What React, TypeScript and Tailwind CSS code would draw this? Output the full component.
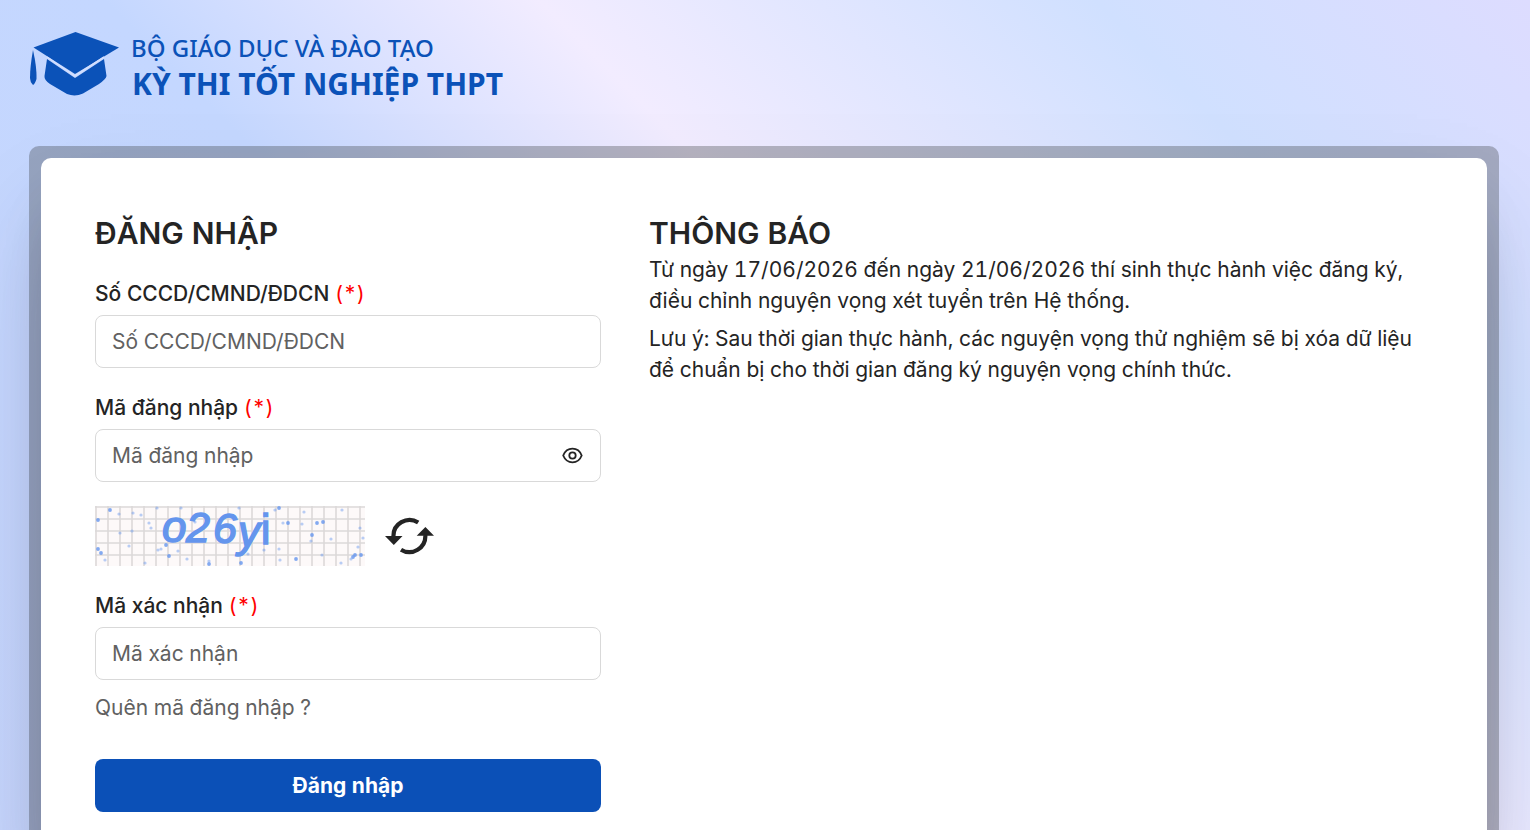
import { FormEvent, useState } from 'react';

const speckles = [
    [3, 14, 2], [15, 4, 2], [24, 8, 1], [3, 43, 2], [6, 47, 2], [10, 54, 1], [38, 7, 1], [37, 25, 1],
    [46, 9, 1], [54, 17, 1], [56, 22, 1], [62, 2, 1], [66, 43, 1], [63, 44, 1], [71, 39, 2], [74, 50, 2],
    [83, 45, 1], [92, 53, 1], [86, 2, 1], [100, 16, 1], [114, 55, 1], [114, 58, 2], [113, 11, 1], [50, 57, 1],
    [127, 33, 1], [146, 57, 2], [144, 2, 1], [153, 48, 1], [169, 44, 1], [184, 2, 2], [180, 4, 1], [193, 17, 2],
    [188, 17, 1], [207, 18, 1], [209, 6, 1], [222, 17, 2], [228, 16, 2], [217, 29, 2], [216, 35, 1], [184, 43, 1],
    [201, 53, 2], [185, 54, 1], [227, 49, 1], [247, 4, 1], [246, 57, 1], [256, 53, 1], [260, 49, 2], [266, 49, 2],
    [258, 51, 2], [263, 41, 1], [268, 32, 1], [265, 22, 1], [25, 27, 1], [34, 40, 1], [86, 31, 1], [236, 33, 1],
];

const Logo = () => (
    <svg viewBox="0 0 500 84" className="h-[84px] w-[500px]" role="img" aria-label="Kỳ thi tốt nghiệp THPT">
        <g fill="#0b52b8">
            <path d="M4.500 19.500 46.500 4 90 19.500 46 46Z" />
            <path d="M18 31 46 50 75 31 77.500 48Q77 51 70 56L54 65.500Q46 69 38 66L21 56Q15 52 15.500 48Z" />
            <path d="M4 22Q8 40 7.500 51Q6 56 4 57Q1 54 1 50Q1 39 4 22Z" />
            <path d="M18 29 46 48 75 29" fill="none" stroke="#d3dffe" strokeWidth="1.500" />
            <text x="102" y="29" fontFamily="Noto Sans, sans-serif" fontSize="24" fontWeight="500">BỘ GIÁO DỤC VÀ ĐÀO TẠO</text>
            <text x="103" y="67" fontFamily="Noto Sans, sans-serif" fontSize="30" fontWeight="700">KỲ THI TỐT NGHIỆP THPT</text>
        </g>
    </svg>
);

const Captcha = () => (
    <svg viewBox="0 0 270 60" className="h-[60px] w-[270px] overflow-visible" role="img" aria-label="Captcha">
        <defs>
            <pattern id="grid" width="12" height="12" patternUnits="userSpaceOnUse">
                <path d="M1 0V12M0 1H12" stroke="#dcd9d9" strokeWidth="1.600" fill="none" />
            </pattern>
        </defs>
        <rect width="270" height="60" fill="#fdf9f9" />
        <rect width="270" height="60" fill="url(#grid)" />
        {speckles.map(([x, y, r], idx) => (
            <circle key={idx} cx={x} cy={y} r={r > 1 ? 1.9 : 1.6} fill="#6495ed" opacity={r > 1 ? 0.8 : 0.45} />
        ))}
        <g fill="#6495ed" stroke="#6495ed" strokeWidth="1.500" fontFamily="Liberation Sans, sans-serif" fontStyle="italic">
            <text x="67" y="36" fontSize="44">o</text>
            <text x="91" y="36" fontSize="43">2</text>
            <text x="118" y="37" fontSize="43">6</text>
            <text x="143" y="41" fontSize="44">y</text>
            <text x="166" y="38" fontSize="42" fontStyle="normal">i</text>
        </g>
    </svg>
);

const EyeIcon = () => (
    <svg viewBox="0 0 22 18" className="h-[18px] w-[22px]" fill="none" stroke="#242424" strokeWidth="1.800">
        <path d="M1.200 8.500C3 4.100 6.300 1.700 10.500 1.700S18 4.100 19.700 8.500C18 12.900 14.700 15.300 10.500 15.300S3 12.900 1.200 8.500Z" />
        <circle cx="10.500" cy="8.500" r="3.200" />
    </svg>
);

const RefreshIcon = () => (
    <svg viewBox="0 0 50 38" className="h-[38px] w-[50px]">
        <path d="M8.500 20A16 16 0 0 1 33.200 5.600M40.300 18A16 16 0 0 1 16 32.700" fill="none" stroke="#242424" strokeWidth="4.200" />
        <path d="M0 19H17.500L8.800 28ZM31.700 18.800H49L40.400 10Z" fill="#242424" />
    </svg>
);

type FieldProps = {
    id: string;
    label: string;
    type?: string;
    children?: React.ReactNode;
};

const Field = ({ id, label, type = 'text', children }: FieldProps) => (
    <div>
        <label htmlFor={id} className="block text-[21px] leading-8 font-medium mb-[5px]">
            {label} <span className="text-[#ff0000] font-normal">(*)</span>
        </label>
        <div className="flex h-[53px] items-center rounded-lg border border-[#d9d9d9] bg-white px-4">
            <input
                id={id}
                type={type}
                placeholder={label}
                className="min-w-0 flex-1 bg-transparent text-[21px] outline-none placeholder:text-[#616161]"
            />
            {children}
        </div>
    </div>
);

const App = () => {
    const [showCode, setShowCode] = useState(false);

    const handleSubmit = (e: FormEvent) => e.preventDefault();

    return (
        <div className="min-h-screen overflow-hidden bg-[linear-gradient(45deg,#c6d5fc_0%,#c4d7ff_41%,#f2ecff_59%,#d0e0ff_82%,#dddcff_100%)] px-[29px] font-['Inter',sans-serif] text-[#242424] tabular-nums">
            <header className="pt-7 pb-[34px]">
                <Logo />
            </header>

            <main className="mr-[2px] rounded-[10px] bg-[#2b302f]/30 p-3">
                <div className="flex gap-12 rounded-[10px] bg-white px-[54px] pt-14 pb-16 shadow-[0_50px_100px_-20px_rgba(50,50,93,0.25),0_30px_60px_-30px_rgba(0,0,0,0.3)]">
                    <form onSubmit={handleSubmit} className="w-[38%] max-w-[506px] shrink-0">
                        <h1 className="text-[30px] leading-[38px] font-semibold">ĐĂNG NHẬP</h1>
                        <div className="mt-[26px] flex flex-col gap-6">
                            <Field id="cccd" label="Số CCCD/CMND/ĐDCN" />
                            <Field id="code" label="Mã đăng nhập" type={showCode ? 'text' : 'password'}>
                                <button type="button" aria-label="Hiện mã đăng nhập" onClick={() => setShowCode(!showCode)}>
                                    <EyeIcon />
                                </button>
                            </Field>
                            <div className="flex items-center gap-5">
                                <Captcha />
                                <button type="button" aria-label="Đổi mã xác nhận">
                                    <RefreshIcon />
                                </button>
                            </div>
                            <Field id="captcha" label="Mã xác nhận" />
                        </div>
                        <a href="#" className="mt-3 block text-[21px] leading-8 text-[#616161]">Quên mã đăng nhập ?</a>
                        <button type="submit" className="mt-[35px] h-[53px] w-full rounded-lg bg-[#0b50b7] text-[21px] font-bold text-white">
                            Đăng nhập
                        </button>
                    </form>

                    {/* Announcement column */}
                    <section className="min-w-0 flex-1">
                        <h2 className="mb-[2px] text-[30px] leading-[38px] font-semibold">THÔNG BÁO</h2>
                        <p className="mb-[7px] text-[21px] leading-[31px]">
                            Từ ngày 17/06/2026 đến ngày 21/06/2026 thí sinh thực hành việc đăng ký, điều chỉnh nguyện vọng xét tuyển trên Hệ thống.
                        </p>
                        <p className="text-[21px] leading-[31px]">
                            Lưu ý: Sau thời gian thực hành, các nguyện vọng thử nghiệm sẽ bị xóa dữ liệu để chuẩn bị cho thời gian đăng ký nguyện vọng chính thức.
                        </p>
                    </section>
                </div>
            </main>
        </div>
    );
};

export default App;
